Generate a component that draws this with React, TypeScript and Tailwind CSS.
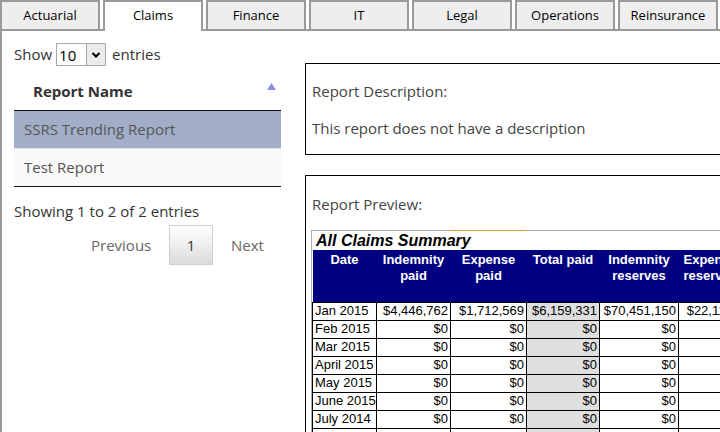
import React from 'react';

const tabs = ['Actuarial', 'Claims', 'Finance', 'IT', 'Legal', 'Operations', 'Reinsurance'];

const rows = [
  ['Jan 2015', '$4,446,762', '$1,712,569', '$6,159,331', '$70,451,150', '$22,118,400'],
  ['Feb 2015', '$0', '$0', '$0', '$0', '$0'],
  ['Mar 2015', '$0', '$0', '$0', '$0', '$0'],
  ['April 2015', '$0', '$0', '$0', '$0', '$0'],
  ['May 2015', '$0', '$0', '$0', '$0', '$0'],
  ['June 2015', '$0', '$0', '$0', '$0', '$0'],
  ['July 2014', '$0', '$0', '$0', '$0', '$0'],
  ['Aug 2014', '$0', '$0', '$0', '$0', '$0'],
];

// column widths taken from the cell borders in the screenshot
const colWidths = ['w-[64px]', 'w-[74px]', 'w-[76px]', 'w-[73px]', 'w-[79px]', 'w-[82px]'];

const ReportTable = () => (
  <div className="relative border border-[#b0b0b0] w-[520px]">
    <div className="absolute -top-px left-[138px] w-[76px] h-px bg-[#e3a23c]" />
    <div className="font-['Liberation_Sans',Arial,sans-serif] text-[16px] font-bold italic text-black leading-[19px] pl-[4px]">
      All Claims Summary
    </div>
    <table className="w-[448px] border-collapse table-fixed font-['Liberation_Sans',Arial,sans-serif] text-[13px] leading-[16px] text-black">
      <colgroup>
        {colWidths.map((w, i) => (
          <col key={i} className={w} />
        ))}
      </colgroup>
      <thead>
        <tr className="bg-[#000080] text-white h-[52px] align-top">
          <th className="pt-[2px] font-bold">Date</th>
          <th className="pt-[2px] font-bold">Indemnity<br />paid</th>
          <th className="pt-[2px] font-bold">Expense<br />paid</th>
          <th className="pt-[2px] font-bold">Total paid</th>
          <th className="pt-[2px] font-bold">Indemnity<br />reserves</th>
          <th className="pt-[2px] pl-[5px] font-bold text-left whitespace-nowrap">Expense<br />reserves</th>
        </tr>
      </thead>
      <tbody>
        {rows.map((r) => (
          <tr key={r[0]} className="h-[18px]">
            <td className="border border-black px-[2px] whitespace-nowrap overflow-hidden">{r[0]}</td>
            <td className="border border-black px-[2px] text-right">{r[1]}</td>
            <td className="border border-black px-[2px] text-right">{r[2]}</td>
            <td className="border border-black px-[2px] text-right bg-[#dfdfdf]">{r[3]}</td>
            <td className="border border-black px-[2px] text-right">{r[4]}</td>
            <td className="border border-black px-[2px] text-right whitespace-nowrap">{r[5]}</td>
          </tr>
        ))}
      </tbody>
    </table>
  </div>
);

const App = () => {
  return (
    <div className="w-[720px] h-[432px] overflow-hidden bg-white font-['Open_Sans',sans-serif] text-[#333]">
      {/* tabs */}
      <div className="flex gap-[3px] h-[29px] relative z-10">
        {tabs.map((t) => (
          <div
            key={t}
            className={
              t === 'Claims'
                ? 'w-[100px] h-[31px] shrink-0 border-2 border-b-0 border-[#9a9a9a] bg-white flex items-center justify-center pb-[2px] text-[13px] text-black'
                : 'w-[100px] h-[29px] shrink-0 border-2 border-b-0 border-[#9a9a9a] bg-[#eeeeee] flex items-center justify-center text-[13px] text-black'
            }
          >
            {t}
          </div>
        ))}
      </div>

      {/* content */}
      <div className="border-t-2 border-l-2 border-[#9a9a9a] flex h-[403px]">
        {/* left list */}
        <div className="w-[279px] shrink-0 pl-[12px] text-[15px]">
          <div className="flex items-center h-[37px] pt-[10px]">
            <span>Show</span>
            <div className="ml-[4px] w-[50px] h-[23px] border border-[#a9a9a9] bg-white flex items-stretch">
              <span className="flex-1 pl-[2px] text-[15px] text-black leading-[22px]">10</span>
              <div className="w-[19px] border-l border-[#a9a9a9] bg-[#ebebeb] flex items-center justify-center">
                <svg width="10" height="8" viewBox="0 0 10 8">
                  <path d="M1.5 2 L5 5.5 L8.5 2" stroke="#000" strokeWidth="2" fill="none" />
                </svg>
              </div>
            </div>
            <span className="ml-[6px]">entries</span>
          </div>

          <div className="w-[267px]">
            <div className="h-[43px] flex items-center justify-between pl-[19px] pr-[5px] pt-[4px] border-b border-[#111] font-bold">
              <span>Report Name</span>
              <svg width="9" height="7" viewBox="0 0 9 7" className="-mt-[10px]">
                <path d="M4.5 0 L9 7 L0 7 Z" fill="#8a8ee0" />
              </svg>
            </div>
            <div className="h-[38px] flex items-center pl-[10px] bg-[#a2aec7] text-[#555] border-b border-[#e2e2e2]">
              SSRS Trending Report
            </div>
            <div className="h-[38px] flex items-center pl-[10px] bg-[#f9f9f9] text-[#555] border-b border-[#111]">
              Test Report
            </div>
          </div>

          <div className="mt-[14px] h-[20px] flex items-center">Showing 1 to 2 of 2 entries</div>

          <div className="flex items-center mt-[4px] ml-[77px]">
            <span className="text-[#666] w-[60px]">Previous</span>
            <div className="ml-[18px] w-[44px] h-[40px] border border-[#cfcfcf] bg-gradient-to-b from-white to-[#dcdcdc] flex items-center justify-center text-[#333]">
              1
            </div>
            <span className="ml-[18px] text-[#666]">Next</span>
          </div>
        </div>

        {/* right panel */}
        <div className="flex-1 pl-[24px] pt-[32px] text-[15px] text-[#444] min-w-0">
          <div className="h-[92px] border border-black border-r-0 pl-[6px] pt-[17px]">
            <div className="h-[20px] flex items-center">Report Description:</div>
            <div className="h-[20px] flex items-center mt-[17px]">This report does not have a description</div>
          </div>

          <div className="mt-[20px] border border-black border-r-0 border-b-0 pl-[5px] pt-[18px] h-[300px]">
            <div className="h-[20px] flex items-center pl-[1px]">Report Preview:</div>
            <div className="mt-[16px]">
              <ReportTable />
            </div>
          </div>
        </div>
      </div>
    </div>
  );
};

export default App;
